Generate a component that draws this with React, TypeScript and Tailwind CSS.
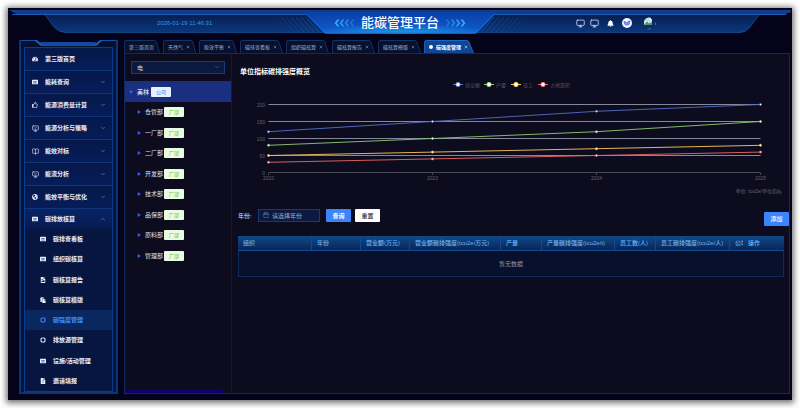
import { useState } from 'react';
import type { ReactNode } from 'react';
import { BookOpen, Calendar, ChevronDown, ChevronUp, Monitor, MonitorCheck, Play, X } from 'lucide-react';
import { FaBell, FaFileAlt, FaFileImage, FaGlobeAmericas, FaPaste, FaRegThumbsUp, FaTachometerAlt } from 'react-icons/fa';

function TableIcon() {
    return (
        <svg viewBox="0 0 12 12" className="w-[6px] h-[6px]">
            <rect x="0" y="1.5" width="12" height="9" rx="1" fill="currentColor" />
            <path d="M2 5h8M2 8h8M6 4v5" stroke="#071a55" strokeWidth="0.8" />
        </svg>
    );
}

function RingIcon() {
    return (
        <svg viewBox="0 0 12 12" className="w-[6px] h-[6px]">
            <circle cx="6" cy="6" r="4.5" fill="none" stroke="currentColor" strokeWidth="2.4" />
            <path d="M6 0V2M6 10V12M0 6H2M10 6H12" stroke="#071641" strokeWidth="1.2" />
        </svg>
    );
}

type MenuItem = { label: string; icon: ReactNode; leaf?: boolean };

const menu: MenuItem[] = [
    { label: '第三版首页', icon: <FaTachometerAlt size={6} />, leaf: true },
    { label: '能耗查询', icon: <TableIcon /> },
    { label: '能源消费量计算', icon: <FaRegThumbsUp size={6} /> },
    { label: '能源分析与策略', icon: <MonitorCheck size={7} /> },
    { label: '能效对标', icon: <BookOpen size={7} /> },
    { label: '能流分析', icon: <MonitorCheck size={7} /> },
    { label: '能效平衡与优化', icon: <FaGlobeAmericas size={6} /> },
];

const subMenu: MenuItem[] = [
    { label: '碳排查看板', icon: <TableIcon /> },
    { label: '组织碳核算', icon: <TableIcon /> },
    { label: '碳核算报告', icon: <FaFileImage size={6} /> },
    { label: '碳核算模版', icon: <FaPaste size={6} /> },
    { label: '碳强度管理', icon: <RingIcon /> },
    { label: '排放源管理', icon: <RingIcon /> },
    { label: '设施/活动管理', icon: <TableIcon /> },
    { label: '邀请填报', icon: <FaFileAlt size={6} /> },
];

const tabs = ['第三版首页', '天然气', '能效平衡', '碳排查看板', '组织碳核算', '碳核算报告', '碳核算模版', '碳强度管理'];

const departments = ['仓管部', '一厂部', '二厂部', '开发部', '技术部', '品保部', '原料部', '管理部'];

const years = ['2022', '2023', '2024', '2025'];

const series = [
    { name: '营业额', color: '#5470c6', legendX: 226, values: [120, 150, 180, 200] },
    { name: '产量', color: '#91cc75', legendX: 257, values: [80, 100, 120, 150] },
    { name: '员工', color: '#fac858', legendX: 284, values: [50, 60, 70, 80] },
    { name: '占地面积', color: '#ee6666', legendX: 311, values: [30, 40, 50, 60] },
];

const columns = [
    { label: '组织', width: 74 },
    { label: '年份', width: 49 },
    { label: '营业额(万元)', width: 49 },
    { label: '营业额碳排强度(tco2e/万元)', width: 91 },
    { label: '产量', width: 41 },
    { label: '产量碳排强度(tco2e/t)', width: 73 },
    { label: '员工数(人)', width: 41 },
    { label: '员工碳排强度(tco2e/人)', width: 74 },
    { label: '公顷', width: 13 },
    { label: '操作', width: 41 },
];

function Header() {
    return (
        <header className="relative h-[32px] shrink-0">
            <svg viewBox="0 0 784 32" preserveAspectRatio="none" className="absolute inset-0 w-full h-full">
                <defs>
                    <linearGradient id="bar" x1="0" y1="0" x2="0" y2="1">
                        <stop offset="0" stopColor="#071f52" />
                        <stop offset="1" stopColor="#0c377e" />
                    </linearGradient>
                    <linearGradient id="mid" x1="0" y1="0" x2="0" y2="1">
                        <stop offset="0" stopColor="#0a3fa8" />
                        <stop offset="1" stopColor="#0f5fd0" />
                    </linearGradient>
                    <radialGradient id="glow" cx="0.5" cy="1" r="0.5">
                        <stop offset="0" stopColor="#16a0e8" />
                        <stop offset="1" stopColor="#16a0e8" stopOpacity="0" />
                    </radialGradient>
                </defs>
                <path d="M1 2H783V4L775 7H10Z" fill="#0f3d8a" />
                <path d="M4 6.5H778" stroke="#1a59ae" />
                <path d="M37 7L46 19Q51 24.500 58 24.500H732Q738 24.500 742 19L751 7Z" fill="url(#bar)" />
                <path d="M37 7L46 19Q51 24.500 58 24.500H732Q738 24.500 742 19L751 7" fill="none" stroke="#14508f" strokeWidth="0.8" />
                {[0, 1, 2, 3, 4, 5, 6, 7].map((i) => (
                    <g key={i} stroke="#1f569c" strokeWidth="0.8" strokeOpacity={0.2 + i * 0.1}>
                        <path d={`M${263 + i * 5} 9L${276 + i * 5} 24`} />
                        <path d={`M${521 - i * 5} 9L${508 - i * 5} 24`} />
                    </g>
                ))}
                <path d="M294 4H490L486 7L468 25.500H317L300 7Z" fill="url(#mid)" />
                <path d="M317 25.500H468L486 7H300Z" fill="url(#glow)" />
                <path d="M299 6.500L317 25H468L486 6.500" fill="none" stroke="#1f74dd" />
            </svg>
            <div className="relative grid grid-cols-[1fr_auto_1fr] items-center h-[26px] pt-[4px]">
                <time className="pl-[149px] text-[6px] leading-[8px] text-[#2a9fe0]">2026-01-19 11:46:31</time>
                <div className="flex items-center gap-[6px]">
                    <Arrows flip />
                    <h1 className="text-[13px] leading-[16px] font-medium text-white">能碳管理平台</h1>
                    <Arrows />
                </div>
                <div className="flex items-center justify-end gap-[5px] pr-[136px] text-[#dbe7ff]">
                    <Monitor size={9} />
                    <Monitor size={9} />
                    <FaBell size={7} className="ml-[3px] text-white" />
                    <svg viewBox="0 0 20 20" className="w-[10px] h-[10px] ml-[3px]">
                        <circle cx="10" cy="10" r="10" fill="#f2f5ff" />
                        <path d="M3 7C6 5 8 8 10 9C12 6 14 5 17 6C16 9 16 15 10 15C5 15 4 11 3 7Z" fill="#4a6fe0" />
                        <path d="M6 9L10 13L15 8" stroke="#fff" strokeWidth="1.200" fill="none" />
                    </svg>
                    <svg viewBox="0 0 26 26" className="w-[13px] h-[13px] ml-[6px]">
                        <path d="M2 7Q6 2 10 1H14L18 6V16H2Z" fill="#c9dcf5" />
                        <path d="M2 16L8 9L12 13L18 10V16Z" fill="#4d9b50" />
                        <path d="M14 1V6H18Z" fill="#fff" />
                        <path d="M9 24H16M25 11V16" stroke="#8aa5cc" />
                    </svg>
                </div>
            </div>
        </header>
    );
}

function Arrows({ flip }: { flip?: boolean }) {
    return (
        <svg viewBox="0 0 21 8" className={flip ? 'w-[21px] h-[8px] rotate-180' : 'w-[21px] h-[8px]'}>
            {[0, 1, 2, 3].map((i) => (
                <path
                    key={i}
                    d={`M${0.5 + i * 5} 0.500H${2.7 + i * 5}L${5.4 + i * 5} 4L${2.7 + i * 5} 7.500H${0.5 + i * 5}L${3.2 + i * 5} 4Z`}
                    fill="#35a8ff"
                    fillOpacity={0.4 + i * 0.2}
                />
            ))}
        </svg>
    );
}

function Sidebar() {
    return (
        <aside className="relative flex flex-col w-[99px] shrink-0 border-2 border-t-0 border-[#0b3474] bg-[#051540] px-[3px] pt-[7px]">
            <svg viewBox="0 0 99 8" className="absolute -left-[2px] top-0 w-[99px] h-[8px]">
                <path d="M0 0H99V8H0Z" fill="#04102f" />
                <path d="M18 0H83L77 5H22Z" fill="#02051a" />
                <path d="M22 2H76L80 5H20Z" fill="#1148a0" />
                <path d="M0 0.500H16L22 5.500H77L83 0.500H99" fill="none" stroke="#1450a0" />
                <path d="M15 0H18L24 5H21ZM84 0H81L75 5H78Z" fill="#1a5cb8" />
                <path d="M1 0V8M98 0V8" stroke="#0b3474" strokeWidth="2" />
            </svg>
            <nav className="relative flex-1 flex flex-col border border-[#0d3b86] bg-[#071641] text-[6px] leading-[8px] font-bold text-[#e8efff]">
                <ul>
                    {menu.map((item) => (
                        <li key={item.label} className="border-b border-[#0e357a] bg-linear-to-b from-[#061849] to-[#061d5a]">
                            <button className="flex items-center w-full h-[22px] pl-[7px] pr-[6px]">
                                <span className="flex w-[13px]">{item.icon}</span>
                                {item.label}
                                {!item.leaf && <ChevronDown size={6} className="ml-auto text-[#8fa4cc]" />}
                            </button>
                        </li>
                    ))}
                </ul>
                <button aria-expanded="true" className="flex items-center w-full h-[20px] pl-[7px] pr-[6px] bg-linear-to-b from-[#072466] to-[#071a50]">
                    <span className="flex w-[13px]"><TableIcon /></span>
                    碳排放核算
                    <ChevronUp size={6} className="ml-auto text-[#8fa4cc]" />
                </button>
                <ul className="flex-1 flex flex-col">
                    {subMenu.map((item) => {
                        const active = item.label === '碳强度管理';
                        return (
                            <li key={item.label} className="flex-1 flex">
                                <a
                                    href="#"
                                    className={active
                                        ? 'flex-1 flex items-center pl-[15px] bg-[#0a285f] text-[#3f8cff]'
                                        : 'flex-1 flex items-center pl-[15px]'}
                                >
                                    <span className="flex w-[13px]">{item.icon}</span>
                                    {item.label}
                                </a>
                            </li>
                        );
                    })}
                </ul>
            </nav>
        </aside>
    );
}

function TabBar() {
    const [current, setCurrent] = useState('碳强度管理');

    return (
        <div role="tablist" className="flex gap-[3px] h-[13px] shrink-0">
            {tabs.map((tab, i) => {
                const active = tab === current;
                return (
                    <button
                        key={tab}
                        role="tab"
                        aria-selected={active}
                        onClick={() => setCurrent(tab)}
                        className={active
                            ? 'relative flex items-center gap-[3px] pl-[5px] pr-[6px] text-[5px] leading-[8px] whitespace-nowrap text-white font-bold'
                            : 'relative flex items-center gap-[3px] pl-[5px] pr-[6px] text-[5px] leading-[8px] whitespace-nowrap text-[#a3afca]'}
                    >
                        <svg viewBox="0 0 40 13" preserveAspectRatio="none" className="absolute inset-0 w-full h-full">
                            <path
                                d="M0.500 13V2Q0.500 0.500 2 0.500H34Q35.500 0.500 36 2L39.500 13"
                                fill={active ? '#0f4596' : '#06102f'}
                                stroke={active ? '#2465b8' : '#143264'}
                                vectorEffect="non-scaling-stroke"
                            />
                        </svg>
                        {active && <span className="relative w-[4px] h-[4px] rounded-full bg-white" />}
                        <span className="relative">{tab}</span>
                        {i > 0 && <X size={4} strokeWidth={3} className="relative" />}
                    </button>
                );
            })}
        </div>
    );
}

function OrgTree() {
    return (
        <section className="flex flex-col w-[107px] shrink-0 border-r border-[#141938]">
            <div className="relative mx-[6px] mt-[7px]">
                <select
                    aria-label="能源类型"
                    className="block w-full h-[13px] appearance-none border border-[#173a78] bg-[#0b1a40] pl-[5px] text-[6px] leading-[8px] text-[#c9d3ea]"
                >
                    <option>电</option>
                </select>
                <ChevronDown size={6} className="absolute right-[5px] top-[3px] text-[#66789f] pointer-events-none" />
            </div>
            <div className="flex items-center h-[21px] mt-[7px] pl-[4px] bg-[#1b2f80] text-[6px] leading-[8px] text-white">
                <Play size={4} fill="currentColor" className="rotate-90 text-[#3d63f0]" />
                <span className="ml-[4px]">美林</span>
                <span className="ml-[2px] w-[20px] h-[10px] rounded-[1px] bg-[#e6f1ff] text-center text-[5px] leading-[10px] text-[#3f86d8]">公司</span>
            </div>
            <ul className="flex flex-col h-[164px] text-[6px] leading-[8px] text-[#dfe4f0]">
                {departments.map((name) => (
                    <li key={name} className="flex-1 flex items-center pl-[12px]">
                        <Play size={4} fill="currentColor" className="text-[#3d63f0]" />
                        <span className="ml-[4px]">{name}</span>
                        <span className="ml-[1px] w-[20px] h-[10px] rounded-[1px] bg-[#ebfbe2] text-center text-[5px] leading-[10px] text-[#67c23a]">厂部</span>
                    </li>
                ))}
            </ul>
            <div className="mt-auto mr-[8px] h-[3px] bg-[#0d0070]" />
        </section>
    );
}

function IntensityChart() {
    const px = (i: number) => 36.5 + i * 164;
    const py = (v: number) => 94.5 - v * 0.34;

    return (
        <svg viewBox="0 0 557 120" className="block w-full text-[5px]" role="img" aria-label="单位指标碳排强度概览">
            {series.map((s) => (
                <g key={s.name}>
                    <path d={`M${s.legendX - 5} 6.500h10`} stroke={s.color} />
                    <circle cx={s.legendX} cy="6.500" r="2.200" fill="#fff" stroke={s.color} strokeWidth="0.800" />
                    <text x={s.legendX + 7} y="8.500" fill="#555562">{s.name}</text>
                </g>
            ))}
            {[0, 50, 100, 150, 200].map((v) => (
                <g key={v}>
                    <path d={`M36.500 ${py(v)}H528.500`} stroke={v === 0 ? '#474957' : '#85879a'} />
                    <text x="33" y={py(v) + 2} textAnchor="end" fill="#62626e">{v}</text>
                </g>
            ))}
            {years.map((year, i) => (
                <g key={year}>
                    <path d={`M${px(i)} 95v2`} stroke="#474957" />
                    <text x={px(i)} y="102" textAnchor="middle" fill="#62626e">{year}</text>
                </g>
            ))}
            {series.map((s) => (
                <g key={s.name}>
                    <polyline points={s.values.map((v, i) => `${px(i)},${py(v)}`).join(' ')} fill="none" stroke={s.color} strokeWidth="0.900" />
                    {s.values.map((v, i) => (
                        <circle key={i} cx={px(i)} cy={py(v)} r="1" fill="#fff" stroke={s.color} strokeWidth="0.700" />
                    ))}
                </g>
            ))}
            <text x="550" y="115" textAnchor="end" fill="#62626e">单位: tco2e/单位指标</text>
        </svg>
    );
}

function Filters() {
    return (
        <div className="flex items-start mt-[11px] pl-[6px] text-[6px] leading-[8px]">
            <form className="flex items-center h-[13px]" onSubmit={(e) => e.preventDefault()}>
                <label htmlFor="year" className="w-[20px] text-[#dfe4f0]">年份:</label>
                <div className="relative">
                    <Calendar size={6} className="absolute left-[5px] top-[3px] text-[#7484a8]" />
                    <input
                        id="year"
                        placeholder="请选择年份"
                        className="block w-[62px] h-[13px] border border-[#173a78] bg-[#0b1a40] pl-[13px] text-white placeholder:text-[#a4aec6]"
                    />
                </div>
                <button type="submit" className="ml-[6px] w-[25px] h-[13px] rounded-[1px] bg-[#3a85fb] font-bold text-white">查询</button>
                <button type="reset" className="ml-[4px] w-[25px] h-[13px] rounded-[1px] bg-white font-bold text-[#4a4d55]">重置</button>
            </form>
            <button className="ml-auto mt-[3px] w-[25px] h-[14px] rounded-[1px] bg-[#3a85fb] font-medium text-white">添加</button>
        </div>
    );
}

function DataTable() {
    return (
        <div className="mt-[10px] pl-[6px] pr-[5px]">
            <table className="w-full table-fixed border-separate border-spacing-0 text-left text-[6px] leading-[8px]">
                <colgroup>
                    {columns.map((c) => (
                        <col key={c.label} style={{ width: c.width }} />
                    ))}
                </colgroup>
                <thead>
                    <tr className="h-[15px] bg-linear-to-b from-[#0f4a88] to-[#072458] text-[#6fb4f5]">
                        {columns.map((c, i) => (
                            <th
                                key={c.label}
                                className={i < 8
                                    ? 'p-0 pl-[5px] border-r border-b border-[#17498a] font-medium overflow-hidden whitespace-nowrap'
                                    : 'p-0 pl-[5px] border-b border-[#17498a] font-medium overflow-hidden whitespace-nowrap'}
                            >
                                {c.label}
                            </th>
                        ))}
                    </tr>
                </thead>
                <tbody>
                    <tr className="h-[26px] bg-[#07102c]">
                        <td colSpan={columns.length} className="p-0 border border-t-0 border-[#122a58] text-center text-[#8f95a5]">暂无数据</td>
                    </tr>
                </tbody>
            </table>
        </div>
    );
}

export default function App() {
    return (
        <div className="min-h-screen flex bg-white p-[8px] font-['Liberation_Sans','Noto_Sans_CJK_SC',sans-serif]">
            <div className="flex-1 min-w-0 flex flex-col bg-[#05031a] shadow-[0_1px_6px_2px_rgba(0,0,0,0.550)]">
                <Header />
                <div className="flex-1 flex gap-[6px] pl-[11px] pr-[2px] pb-[6px]">
                    <Sidebar />
                    <main className="flex-1 min-w-0 flex flex-col">
                        <TabBar />
                        <div className="flex-1 flex border border-[#12295c] bg-[#0d0b1e]">
                            <OrgTree />
                            <section className="flex-1 min-w-0">
                                <h2 className="pl-[8px] pt-[12px] text-[7px] leading-[12px] font-bold text-white">单位指标碳排强度概览</h2>
                                <IntensityChart />
                                <Filters />
                                <DataTable />
                            </section>
                        </div>
                    </main>
                </div>
            </div>
        </div>
    );
}
